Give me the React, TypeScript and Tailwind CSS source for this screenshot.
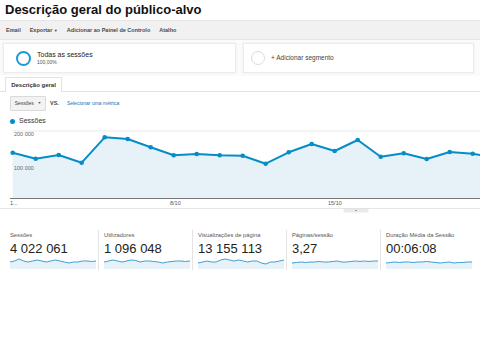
import React from 'react';

const FONT = { fontFamily: '"Liberation Sans", Arial, sans-serif' };

const chartData = [152.7, 158.7, 155, 162.7, 137.3, 139, 147.3, 155.3, 154, 155.3, 155.7, 163.7, 152.3, 144, 151, 140, 156.7, 153.3, 159, 152, 153.7];
const TOP = 127;

const MainChart: React.FC = () => {
  const pts = chartData.map((v, i) => [12.7 + 23 * i, v - TOP]);
  pts.push([480, 155 - TOP]);
  const line = pts.map((p, i) => `${i === 0 ? 'M' : 'L'}${p[0].toFixed(1)} ${p[1].toFixed(1)}`).join(' ');
  const area = `${line} L480 71 L12.7 71 Z`;
  return (
    <svg width="480" height="88" className="block">
      <line x1="12" y1="4" x2="480" y2="4" stroke="#e9e9e9" strokeWidth="1" />
      <line x1="12" y1="37.5" x2="480" y2="37.5" stroke="#e9e9e9" strokeWidth="1" />
      <path d={area} fill="#e6f2f8" />
      <path d={line} fill="none" stroke="#058dc7" strokeWidth="2" strokeLinejoin="round" />
      {chartData.map((v, i) => (
        <circle key={i} cx={12.7 + 23 * i} cy={v - TOP} r="2.3" fill="#058dc7" />
      ))}
      <text x="14" y="9" fontSize="5.5" fill="#666" style={FONT}>200 000</text>
      <text x="14" y="42.5" fontSize="5.5" fill="#666" style={FONT}>100 000</text>
      <line x1="10" y1="71.5" x2="480" y2="71.5" stroke="#777" strokeWidth="1" />
      <text x="10" y="78" fontSize="5.5" fill="#555" style={FONT}>1...</text>
      <text x="170" y="78" fontSize="5.5" fill="#555" style={FONT}>8/10</text>
      <text x="328" y="78" fontSize="5.5" fill="#555" style={FONT}>15/10</text>
      <line x1="0" y1="81.5" x2="480" y2="81.5" stroke="#e6e6e6" strokeWidth="1" />
      <rect x="344" y="82" width="24" height="3" fill="#eeeeee" stroke="#d8d8d8" strokeWidth="0.5" />
      <line x1="355" y1="83.5" x2="357" y2="83.5" stroke="#888" strokeWidth="0.8" />
    </svg>
  );
};

const Spark: React.FC<{ data: number[] }> = ({ data }) => {
  const w = 86;
  const step = w / (data.length - 1);
  const line = data.map((v, i) => `${i === 0 ? 'M' : 'L'}${(i * step).toFixed(1)} ${v.toFixed(1)}`).join(' ');
  return (
    <svg width={w} height="12" className="block">
      <path d={`${line} L${w} 12 L0 12 Z`} fill="#e6f2f8" />
      <path d={line} fill="none" stroke="#3aa0d5" strokeWidth="1" />
    </svg>
  );
};

const metrics = [
  { label: 'Sessões', value: '4 022 061', data: [5, 4, 2, 4, 5, 4, 3, 4, 5, 4, 3, 4, 5, 6, 5, 5, 4, 4, 4.5, 4] },
  { label: 'Utilizadores', value: '1 096 048', data: [5, 4, 3, 4, 5, 4, 3, 3.5, 5, 4, 4, 4.5, 5, 6, 5, 4.5, 4, 4, 4.5, 4] },
  { label: 'Visualizações de página', value: '13 155 113', data: [6, 5, 4, 5, 5, 3, 2, 3, 4, 3, 4, 5, 4, 4, 6, 7, 5, 5, 4, 3] },
  { label: 'Páginas/sessão', value: '3,27', data: [6, 5.5, 5, 5.5, 5, 5, 4.5, 5, 5, 4.5, 4, 5, 5, 4.5, 4, 4.5, 4, 4.5, 4, 4] },
  { label: 'Duração Média da Sessão', value: '00:06:08', data: [6, 5.5, 5, 5.5, 5, 5, 5.5, 5, 5, 4.5, 5, 5.5, 6, 5.5, 5, 6, 5.5, 5.5, 5, 5] },
];

export default function App() {
  return (
    <div className="w-[480px] h-[340px] bg-white overflow-hidden text-[#222]" style={FONT}>
      <div className="h-[20px] flex items-center px-[5px] text-[13px] font-bold text-[#111]">
        Descrição geral do público-alvo
      </div>

      <div className="h-[20px] bg-[#f1f1f1] border-y border-[#e6e6e6] flex items-center px-[6px] gap-[9px] text-[5.5px] font-bold text-[#4a4a4a]">
        <span>Email</span>
        <span>Exportar <span className="text-[4px]">▼</span></span>
        <span>Adicionar ao Painel de Controlo</span>
        <span>Atalho</span>
      </div>

      <div className="h-[36px] flex items-center gap-[7px] px-[3px] bg-[#fbfbfb]">
        <div className="w-[233px] h-[30px] bg-white border border-[#ececec] shadow-[0_0_2px_rgba(0,0,0,0.08)] flex items-center pl-[12px] gap-[6px]">
          <div className="w-[15px] h-[15px] rounded-full border-[2.5px] border-[#1a9ad6]" />
          <div className="flex flex-col leading-none">
            <span className="text-[7px] text-[#222]">Todas as sessões</span>
            <span className="text-[5px] text-[#555] mt-[2px]">100,00%</span>
          </div>
        </div>
        <div className="w-[231px] h-[30px] bg-white border border-[#ececec] shadow-[0_0_2px_rgba(0,0,0,0.08)] flex items-center pl-[7px] gap-[6px]">
          <div className="w-[14px] h-[14px] rounded-full border-[1.5px] border-[#dcdcdc]" />
          <span className="text-[6.5px] text-[#444]">+ Adicionar segmento</span>
        </div>
      </div>

      <div className="h-[16px] flex items-end px-[5px] border-b border-[#e2e2e2]">
        <div className="h-[15px] w-[57px] border-x border-t border-[#e2e2e2] bg-white flex items-center justify-center text-[6px] font-bold text-[#333] -mb-px">
          Descrição geral
        </div>
      </div>

      <div className="h-[23px] flex items-center px-[10px] gap-[4px]">
        <div className="w-[36px] h-[15px] bg-[#f3f3f3] border border-[#dadada] rounded-[1px] flex items-center justify-center gap-[4px] text-[5px] text-[#444]">
          <span>Sessões</span>
          <span className="text-[3.5px]">▼</span>
        </div>
        <span className="text-[5.5px] font-bold text-[#444]">VS.</span>
        <span className="text-[5px] text-[#1e6fb8] ml-[4px]">Selecionar uma métrica</span>
      </div>

      <div className="h-[12px] flex items-center px-[10px] gap-[4px]">
        <div className="w-[5px] h-[5px] rounded-full bg-[#058dc7]" />
        <span className="text-[7px] text-[#333]">Sessões</span>
      </div>

      <MainChart />

      <div className="flex px-[5px] mt-[15px]">
        {metrics.map((m, i) => (
          <div
            key={m.label}
            className={`w-[94px] h-[40px] px-[5px] pt-[3px] ${i < 4 ? 'border-r border-[#e3e3e3]' : ''}`}
          >
            <div className="text-[5.8px] text-[#555] leading-none">{m.label}</div>
            <div className="text-[13px] text-[#222] leading-none mt-[3px]">{m.value}</div>
            <div className="mt-[2px]">
              <Spark data={m.data} />
            </div>
          </div>
        ))}
      </div>
    </div>
  );
}
